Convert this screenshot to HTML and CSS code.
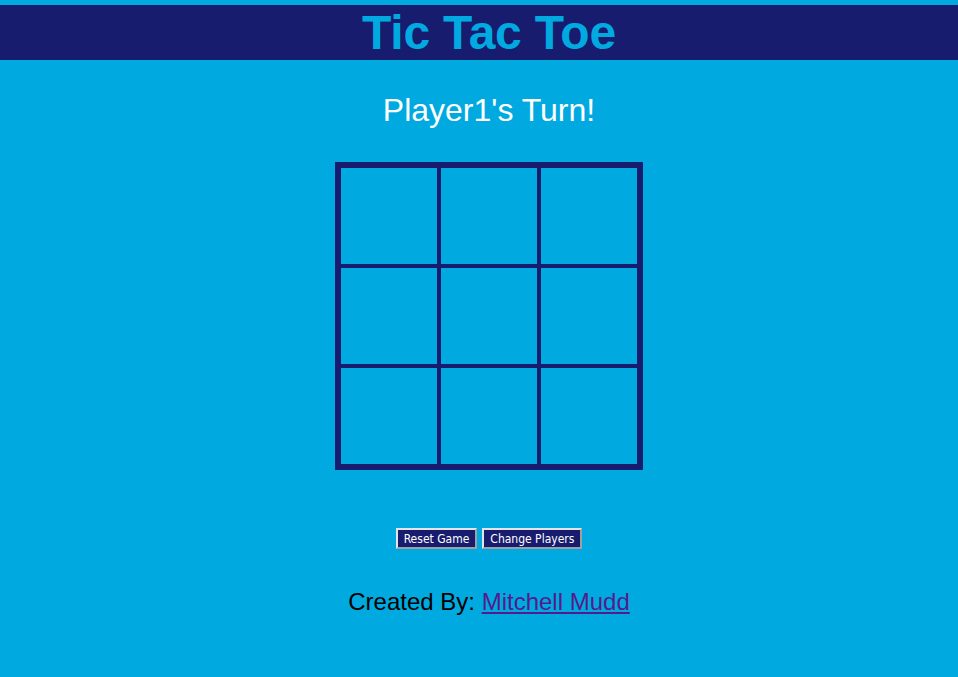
FILE: index.html
```html
<!DOCTYPE html>
<html>
<head>
<meta charset="utf-8">
<title>Tic Tac Toe</title>
<link rel="stylesheet" href="styles.css">
</head>
<body>
<h1 class="title">Tic Tac Toe</h1>
<main class="content">
  <h2 class="status">Player1's Turn!</h2>
  <div class="board">
    <div class="cell"></div><div class="cell"></div><div class="cell"></div>
    <div class="cell"></div><div class="cell"></div><div class="cell"></div>
    <div class="cell"></div><div class="cell"></div><div class="cell"></div>
  </div>
  <div class="controls">
    <button class="btn">Reset Game</button>
    <button class="btn">Change Players</button>
  </div>
  <p class="credit">Created By: <a class="author" href="#">Mitchell Mudd</a></p>
</main>
</body>
</html>
```
FILE: styles.css
```css
html, body {
  margin: 0;
  background: #00aae0;
}
body {
  padding-top: 5px;
  font-family: "Liberation Sans", Arial, sans-serif;
}
.title {
  margin: 0;
  background: #171c6f;
  color: #00aae0;
  font-size: 48px;
  font-weight: bold;
  line-height: 55px;
  text-align: center;
  padding-left: 20px;
  letter-spacing: -0.2px;
}
.content {
  padding-left: 20px;
  display: flex;
  flex-direction: column;
  align-items: center;
}
.status {
  margin: 32px 0 0;
  font-size: 32px;
  font-weight: normal;
  line-height: 37px;
  color: #ffffff;
}
.board {
  margin-top: 33px;
  display: grid;
  grid-template-columns: repeat(3, 96px);
  grid-template-rows: repeat(3, 96px);
  gap: 4px;
  background: #171c6f;
  border: 6px solid #171c6f;
}
.cell {
  background: #00aae0;
}
.controls {
  margin-top: 58px;
  display: flex;
  gap: 5px;
}
.btn {
  height: 21px;
  margin: 0;
  padding: 0 6px;
  background: #171c6f;
  color: #ffffff;
  font-family: "DejaVu Sans Condensed", "DejaVu Sans", Verdana, sans-serif;
  font-stretch: condensed;
  font-size: 12px;
  border-style: solid;
  border-width: 2px;
  border-color: #e4e4e4 #a0a0a0 #a0a0a0 #e4e4e4;
}
.credit {
  margin: 39px 0 0;
  font-size: 24px;
  line-height: 28px;
  color: #000000;
}
.author {
  color: #551a8b;
}
```
